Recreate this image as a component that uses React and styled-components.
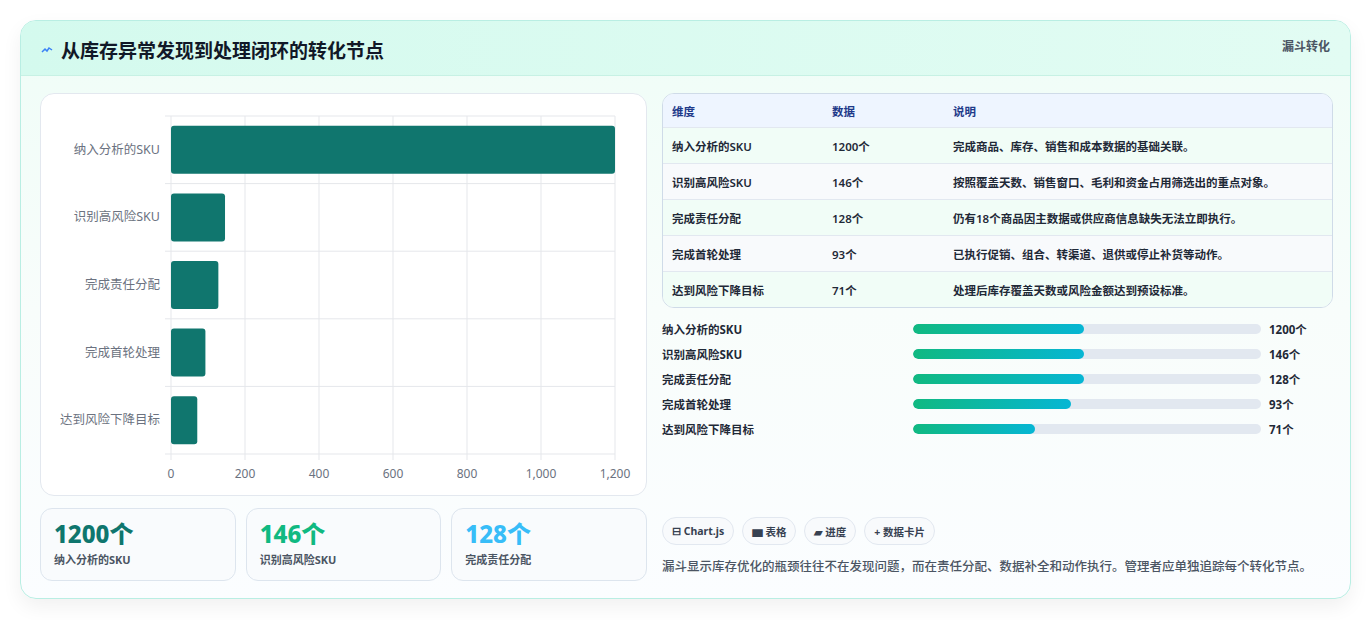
import React from "react";
import styled, { createGlobalStyle } from "styled-components";

const Global = createGlobalStyle`
  body { margin:0; background:#f3f4f6; font-family: "Noto Sans", "Noto Sans CJK SC", sans-serif; }
`;
const Page = styled.div`padding:20px 20px 20px 20px; height:620px; box-sizing:border-box; background:#fff;`;
const Card = styled.div`
  width:1331px; height:579px; box-sizing:border-box; border:1px solid #b9eee3; border-radius:16px;
  background:linear-gradient(180deg,#effdf7 0%,#f8fdfb 50%,#fbfdff 100%); overflow:hidden;
  box-shadow:0 8px 20px rgba(0,0,0,0.06); display:flex; flex-direction:column;
`;
const Header = styled.div`
  height:55px; box-sizing:border-box; display:flex; justify-content:space-between; align-items:flex-start;
  padding:0 20px 0 20px; background:linear-gradient(90deg,#d4faee,#e2fcf3); border-bottom:1px solid #c7f1e4;
`;
const Title = styled.h1`margin:15px 0 0; font-size:19px; font-weight:700; color:#111827; display:flex; align-items:center; gap:8px;`;
const Tag = styled.div`margin-top:16px; font-size:12px; font-weight:700; color:#4b5563;`;
const Body = styled.div`display:grid; grid-template-columns:607px 671px; gap:15px; padding:17px 19px 0 19px;`;
const Col = styled.div`display:flex; flex-direction:column;`;
const ChartBox = styled.div`height:403px; box-sizing:border-box; background:#fff; border:1px solid #e3e8ef; border-radius:14px;`;
const Kpis = styled.div`display:grid; grid-template-columns:repeat(3,1fr); gap:10px; margin-top:12px;`;
const Kpi = styled.div`height:73px; box-sizing:border-box; border:1px solid #dde5ee; border-radius:12px; background:#f9fbfd; padding:10px 13px;`;
const KpiVal = styled.div`font-size:24px; font-weight:800; color:${p=>p.c}; line-height:30px;`;
const KpiLabel = styled.div`font-size:11px; font-weight:700; color:#4b5563; margin-top:2px;`;
const Table = styled.div`border:1px solid #cfdbe8; border-radius:12px; overflow:hidden; background:#fff;`;
const Row = styled.div`display:grid; grid-template-columns:160px 121px 1fr; height:${p=>p.h}px; align-items:center; padding-left:9px;
  font-size:11.5px; font-weight:${p=>p.head?700:600}; color:${p=>p.head?"#1e3a8a":"#1f2937"};
  background:${p=>p.head?"#eef5ff":p.alt?"#f8fafc":"#f1fdf7"}; border-top:${p=>p.first?"none":"1px solid #e2e8f0"};`;
const Progress = styled.div`display:flex; flex-direction:column; gap:11px; margin-top:13px;`;
const PRow = styled.div`display:grid; grid-template-columns:251px 348px 1fr; align-items:center; height:14px; font-size:11.5px; font-weight:700; color:#1f2937;`;
const Track = styled.div`height:10px; border-radius:5px; background:#e2e8f0; overflow:hidden;`;
const Fill = styled.div`height:100%; border-radius:5px; background:linear-gradient(90deg,#10b981,#06b6d4);`;
const PVal = styled.div`padding-left:8px;`;
const Chips = styled.div`display:flex; gap:8px; margin-top:82px;`;
const Chip = styled.div`height:28px; box-sizing:border-box; padding:0 9px; border:1px solid #e2e8f0; border-radius:14px; background:#f8fafc;
  font-size:10.5px; font-weight:700; color:#374151; display:flex; align-items:center;`;
const Note = styled.p`margin:12px 0 0; font-size:12.5px; line-height:20px; color:#4b5563; font-weight:500;`;

const data = [["纳入分析的SKU",1200],["识别高风险SKU",146],["完成责任分配",128],["完成首轮处理",93],["达到风险下降目标",71]];
const desc = ["完成商品、库存、销售和成本数据的基础关联。","按照覆盖天数、销售窗口、毛利和资金占用筛选出的重点对象。","仍有18个商品因主数据或供应商信息缺失无法立即执行。","已执行促销、组合、转渠道、退供或停止补货等动作。","处理后库存覆盖天数或风险金额达到预设标准。"];
const pct = [49,49,49,45.5,35];

function Chart(){
  const x0=130,w=444,y0=22,h=338,rh=h/5;
  return (
    <svg width="605" height="401" style={{display:"block"}}>
      {[0,200,400,600,800,1000,1200].map((t,i)=>{const x=x0+w*t/1200;return <g key={t}>
        <line x1={x} x2={x} y1={y0} y2={y0+h+6} stroke="#e5e7eb"/>
        <text x={x} y={y0+h+24} fontSize="12" fill="#6b7280" textAnchor="middle" fontFamily="Noto Sans">{t.toLocaleString("en-US")}</text></g>})}
      {[0,1,2,3,4,5].map(i=><line key={i} x1={x0-6} x2={x0+w} y1={y0+i*rh} y2={y0+i*rh} stroke="#e5e7eb"/>)}
      {data.map(([l,v],i)=>{const cy=y0+rh*i+rh/2;return <g key={l}>
        <rect x={x0} y={cy-24} width={w*v/1200} height={48} rx="3" fill="#10766e"/>
        <text x={x0-11} y={cy+4} fontSize="12.5" fill="#6b7280" textAnchor="end" fontFamily="Noto Sans, Noto Sans CJK SC">{l}</text></g>})}
    </svg>
  );
}

export default function App(){
  return (<><Global/><Page><Card>
    <Header>
      <Title><svg width="12" height="10" viewBox="0 0 12 10"><path d="M1 7 L4 4 L6 6 L8 3 L11 5" stroke="#3b82f6" strokeWidth="1.5" fill="none"/></svg>从库存异常发现到处理闭环的转化节点</Title>
      <Tag>漏斗转化</Tag>
    </Header>
    <Body>
      <Col>
        <ChartBox><Chart/></ChartBox>
        <Kpis>
          <Kpi><KpiVal c="#0f766e">1200个</KpiVal><KpiLabel>纳入分析的SKU</KpiLabel></Kpi>
          <Kpi><KpiVal c="#10b981">146个</KpiVal><KpiLabel>识别高风险SKU</KpiLabel></Kpi>
          <Kpi><KpiVal c="#38bdf8">128个</KpiVal><KpiLabel>完成责任分配</KpiLabel></Kpi>
        </Kpis>
      </Col>
      <Col>
        <Table>
          <Row head first h={33}><span>维度</span><span>数据</span><span>说明</span></Row>
          {data.map(([l,v],i)=><Row key={l} h={35} alt={i%2===1}><span>{l}</span><span>{v}个</span><span>{desc[i]}</span></Row>)}
        </Table>
        <Progress>
          {data.map(([l,v],i)=><PRow key={l}><span>{l}</span><Track><Fill style={{width:pct[i]+"%"}}/></Track><PVal>{v}个</PVal></PRow>)}
        </Progress>
        <Chips><Chip>⊟ Chart.js</Chip><Chip>▆ 表格</Chip><Chip>▰ 进度</Chip><Chip>+ 数据卡片</Chip></Chips>
        <Note>漏斗显示库存优化的瓶颈往往不在发现问题，而在责任分配、数据补全和动作执行。管理者应单独追踪每个转化节点。</Note>
      </Col>
    </Body>
  </Card></Page></>);
}
